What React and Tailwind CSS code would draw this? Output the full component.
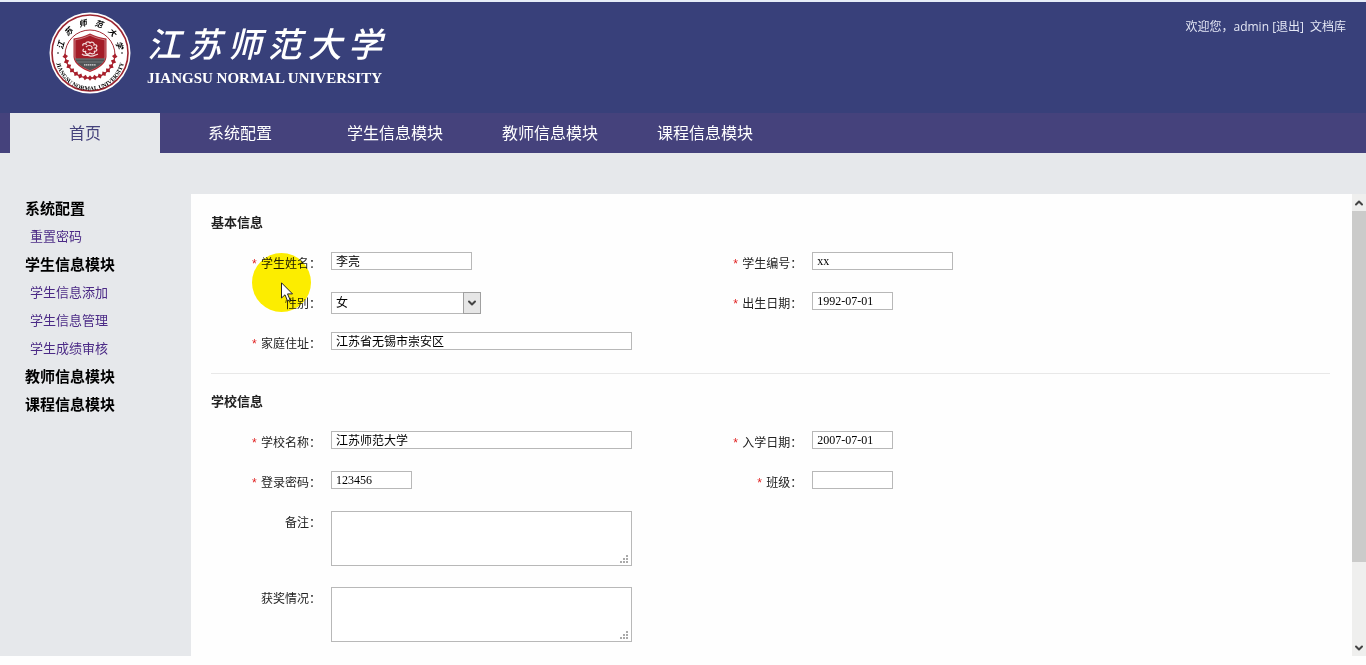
import React from 'react';
import { ChevronDown, ChevronUp } from 'lucide-react';

const TABS = ['首页', '系统配置', '学生信息模块', '教师信息模块', '课程信息模块'];

const MENU = [
  { title: '系统配置', items: ['重置密码'] },
  { title: '学生信息模块', items: ['学生信息添加', '学生信息管理', '学生成绩审核'] },
  { title: '教师信息模块', items: [] },
  { title: '课程信息模块', items: [] },
];

const SCHOOL_CHARS = ['江', '苏', '师', '范', '大', '学'];
const SEAL_ANGLES = [-75, -45, -14, 17, 47, 75];
const DIAMOND_ANGLES = [-82, -70, -58, -46, -34, -23, -11, 0, 11, 23, 34, 46, 58, 70, 82];

/**
 * Seal Component
 * Round university emblem
 */
const Seal = () => (
  <svg viewBox="-42 -42 84 84" className="h-[84px] w-[84px] shrink-0" aria-hidden="true">
    <defs>
      <path id="seal-arc" d="M-34.5 3 A34.5 34.5 0 0 0 34.5 3" />
    </defs>
    <circle r="40.5" fill="#fff" />
    <circle r="38" fill="none" stroke="#9c2530" strokeWidth="1.6" />
    <path d="M-25 2 A25 25 0 1 1 25 2" fill="none" stroke="#a32a34" strokeWidth="1" />
    {DIAMOND_ANGLES.map((angle) => (
      <g key={angle} transform={`rotate(${angle}) translate(0 25)`}>
        <path d="M0 -2.8 L2.4 0 L0 2.8 L-2.4 0 Z" fill="#a8202c" />
        <path d="M-2.8 0 H2.8" stroke="#a8202c" strokeWidth="1" />
      </g>
    ))}
    {SCHOOL_CHARS.map((char, i) => (
      <text
        key={char}
        transform={`rotate(${SEAL_ANGLES[i]})`}
        y="-27.5"
        textAnchor="middle"
        className="fill-black font-['Noto_Sans_CJK_SC',sans-serif] text-[8px] font-bold italic"
      >
        {char}
      </text>
    ))}
    <circle cx="-32" cy="0" r="0.8" />
    <circle cx="32" cy="0" r="0.8" />
    <text className="fill-black font-['Liberation_Serif',serif] text-[6px] font-bold">
      <textPath href="#seal-arc" startOffset="50%" textAnchor="middle">
        JIANGSU NORMAL UNIVERSITY
      </textPath>
    </text>
    {/* Shield */}
    <path d="M0 -19.5 C5 -17 11 -15 16.5 -14.5 V4 C16 11 8 16 0 19 C-8 16 -16 11 -16.5 4 V-14.5 C-11 -15 -5 -17 0 -19.5Z" fill="#b02a33" />
    <path d="M0 -17.8 C5 -15.5 10 -13.8 15 -13.2 V4 C14.5 10 7 14.5 0 17.3 C-7 14.5 -14.5 10 -15 4 V-13.2 C-10 -13.8 -5 -15.5 0 -17.8Z" fill="#a31c27" stroke="#ddb3b5" strokeWidth="0.6" />
    <path d="M-15 5.5 H15 C14 10.5 7 14.5 0 17.3 C-7 14.5 -14 10.5 -15 5.5Z" fill="#4f5355" />
    <path d="M-15 6 H15 M-13 9 H13" stroke="#858b8c" strokeWidth="0.7" />
    <path d="M-6 11.8 H6" stroke="#ddd" strokeWidth="1.2" strokeDasharray="1.4 0.5" />
    <path
      d="M-7 -7 C-8 -9 -6 -10 -4 -9 C-5 -11 -1 -12 0 -10 C2 -12 5 -10 4 -8 C7 -9 8 -6 5 -5 C8 -4 7 -1 4 -2 C6 0 3 2 0 0 C-2 2 -6 1 -4 -2 C-7 0 -8 -3 -6 -4 M-4 -6 C-2 -8 1 -8 2 -6 C3 -4 0 -2 -2 -4 M-8 1 C-5 4 -2 1 0 3 C3 4 5 2 8 1"
      fill="none"
      stroke="#f3dcdc"
      strokeWidth="1.2"
    />
  </svg>
);

/**
 * Field Component
 * Label on the left with its control on the right
 */
const Field = ({ id, label, required, tall, children }) => (
  <div className={`flex items-start ${tall ? 'h-[76px]' : 'h-10'}`}>
    <label htmlFor={id} className="flex w-[120px] shrink-0 justify-end gap-[3px] pt-[3px] pr-[10px] text-xs leading-[18px] text-[#222]">
      {required && <span className="font-['Liberation_Mono',monospace] leading-5 text-[#e02020]">*</span>}
      {label}：
    </label>
    {children}
  </div>
);

const TextInput = ({ id, value = '', width }) => (
  <input
    id={id}
    type="text"
    defaultValue={value}
    className={`h-[18px] border border-[#b8b8b8] bg-white px-1 font-['Liberation_Serif','Noto_Sans_CJK_SC',serif] text-xs leading-4 text-black outline-none ${width}`}
  />
);

const TextBox = ({ id }) => (
  <div className="relative h-[55px] w-[301px]">
    <textarea id={id} className="block h-full w-full resize-none border border-[#b8b8b8] bg-white p-1 text-xs outline-none" />
    {/* Resize grip */}
    <svg viewBox="0 0 9 9" className="pointer-events-none absolute right-[3px] bottom-0.5 h-[9px] w-[9px]" fill="#aaa" aria-hidden="true">
      <path d="M6 0h2v2h-2z M3 3h2v2h-2z M6 3h2v2h-2z M0 6h2v2h-2z M3 6h2v2h-2z M6 6h2v2h-2z" />
    </svg>
  </div>
);

const Header = () => (
  <header className="flex h-[113px] shrink-0 items-start justify-between border-t-2 border-[#e6edf8] bg-[#38407a] pr-5 pl-12">
    <div className="flex items-center gap-[15px] pt-[9px] text-white">
      <Seal />
      <div>
        <div className="flex justify-between font-['Noto_Sans_CJK_SC',sans-serif] text-[34px] leading-[50px] font-medium italic">
          {SCHOOL_CHARS.map((char) => (
            <span key={char}>{char}</span>
          ))}
        </div>
        <div className="font-['Liberation_Serif',serif] text-[15px] leading-5 font-bold whitespace-nowrap">
          JIANGSU NORMAL UNIVERSITY
        </div>
      </div>
    </div>
    <div className="flex gap-1.5 pt-[15px] text-xs leading-5 text-[#e4e7f5]">
      <span>
        欢迎您，admin <a href="#logout">[退出]</a>
      </span>
      <a href="#docs">文档库</a>
    </div>
  </header>
);

const Sidebar = () => (
  <aside className="w-[191px] shrink-0 pt-[41px] pl-[25px]">
    {MENU.map((group) => (
      <div key={group.title}>
        <h2 className="text-[15px] leading-7 font-bold text-black">{group.title}</h2>
        {group.items.map((item) => (
          <a key={item} href="#menu" className="block pl-[5px] text-[13px] leading-7 text-[#4b2a86]">
            {item}
          </a>
        ))}
      </div>
    ))}
  </aside>
);

const ScrollBar = () => (
  <div className="flex w-3.5 shrink-0 flex-col bg-[#efefee] text-[#444]" aria-hidden="true">
    <div className="flex h-[17px] items-center justify-center">
      <ChevronUp size={12} strokeWidth={4} />
    </div>
    <div className="flex-[352] bg-[#cbcbca]" />
    <div className="flex-[77]" />
    <div className="flex h-[17px] items-center justify-center">
      <ChevronDown size={12} strokeWidth={4} />
    </div>
  </div>
);

const StudentForm = () => (
  <form className="min-w-0 flex-1 overflow-y-auto pr-[22px] pl-5 [scrollbar-width:none]">
    <section className="border-b border-[#e8e8e8] pt-[18px]">
      <h3 className="mb-5 text-[13px] leading-5 font-bold text-[#222]">基本信息</h3>
      <div className="grid grid-cols-[43%_57%] pb-px">
        <Field id="name" label="学生姓名" required>
          <TextInput id="name" value="李亮" width="w-[141px]" />
        </Field>
        <Field id="code" label="学生编号" required>
          <TextInput id="code" value="xx" width="w-[141px]" />
        </Field>
        <Field id="gender" label="性别">
          <div className="relative h-[22px] w-[150px]">
            <select
              id="gender"
              defaultValue="女"
              className="block h-full w-full appearance-none border border-[#b8b8b8] bg-white px-1 text-xs text-black outline-none"
            >
              <option>女</option>
              <option>男</option>
            </select>
            <span className="pointer-events-none absolute top-0 right-0 flex h-full w-[18px] items-center justify-center border border-[#a0a0a0] bg-[#e6e6e6] text-[#444]">
              <ChevronDown size={12} strokeWidth={4} />
            </span>
          </div>
        </Field>
        <Field id="birthday" label="出生日期" required>
          <TextInput id="birthday" value="1992-07-01" width="w-[81px]" />
        </Field>
        <Field id="address" label="家庭住址" required>
          <TextInput id="address" value="江苏省无锡市崇安区" width="w-[301px]" />
        </Field>
      </div>
    </section>

    <section className="pt-[17px]">
      <h3 className="mb-5 text-[13px] leading-5 font-bold text-[#222]">学校信息</h3>
      <div className="grid grid-cols-[43%_57%]">
        <Field id="school" label="学校名称" required>
          <TextInput id="school" value="江苏师范大学" width="w-[301px]" />
        </Field>
        <Field id="enrolled" label="入学日期" required>
          <TextInput id="enrolled" value="2007-07-01" width="w-[81px]" />
        </Field>
        <Field id="password" label="登录密码" required>
          <TextInput id="password" value="123456" width="w-[81px]" />
        </Field>
        <Field id="class" label="班级" required>
          <TextInput id="class" width="w-[81px]" />
        </Field>
      </div>
      <Field id="remark" label="备注" tall>
        <TextBox id="remark" />
      </Field>
      <Field id="awards" label="获奖情况" tall>
        <TextBox id="awards" />
      </Field>
    </section>
  </form>
);

/* Mouse pointer with its yellow click highlight */
const Pointer = () => (
  <div className="pointer-events-none">
    <div className="absolute top-[253px] left-[252px] h-[59px] w-[59px] rounded-full bg-[#fdee00] mix-blend-multiply" />
    <svg viewBox="0 0 13 20" className="absolute top-[282px] left-[281px] h-5 w-[13px]" aria-hidden="true">
      <path d="M0.5 0.8 V16 L4 12.8 L6.5 18.8 L9 17.7 L6.5 11.9 H11.5 Z" fill="#fff" stroke="#222" strokeWidth="1" />
    </svg>
  </div>
);

const App = () => (
  <div className="relative flex h-screen flex-col bg-[#e6e8eb] font-['Open_Sans','Noto_Sans_CJK_SC',sans-serif]">
    <Header />
    <nav className="flex h-10 shrink-0 gap-[5px] bg-[#45427c] pl-2.5">
      {TABS.map((tab, i) => (
        <a
          key={tab}
          href="#tab"
          className={`w-[150px] text-center text-base leading-10 ${i === 0 ? 'bg-[#e6e8eb] text-[#45427c]' : 'text-white'}`}
        >
          {tab}
        </a>
      ))}
    </nav>
    <div className="flex min-h-0 flex-1">
      <Sidebar />
      <main className="mt-[41px] flex min-w-0 flex-1 bg-[#fefefe]">
        <StudentForm />
        <ScrollBar />
      </main>
    </div>
    <footer className="h-[9px] shrink-0 bg-[#fefefe]" />
    <Pointer />
  </div>
);

export default App;
